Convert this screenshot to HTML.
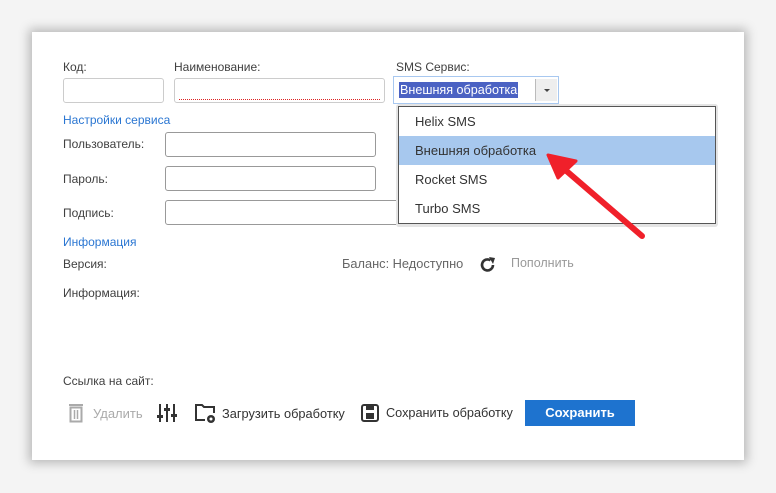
<!DOCTYPE html>
<html><head><meta charset="utf-8"><style>
body{margin:0;width:776px;height:493px;background:#f4f4f4;font-family:"Liberation Sans",Arial,sans-serif;font-size:12px;color:#404040;position:relative;overflow:hidden}
.panel{position:absolute;left:32px;top:32px;width:712px;height:428px;background:#fff;box-shadow:0 0 10px 3px rgba(0,0,0,.25)}
.a{position:absolute;white-space:nowrap}
.in{position:absolute;border:1px solid #b8b8b8;border-radius:3px;background:#fff;box-sizing:border-box}
.blue{color:#2a76d2}
</style></head><body>
<div class="panel"></div>
<div class="a" style="left:63px;top:60px">Код:</div>
<div class="a" style="left:174px;top:60px">Наименование:</div>
<div class="a" style="left:396px;top:60px">SMS Сервис:</div>
<div class="in" style="left:63px;top:78px;width:101px;height:25px;border-color:#ccc"></div>
<div class="in" style="left:174px;top:78px;width:211px;height:25px;border-color:#ccc"><div style="position:absolute;left:4px;right:4px;top:20px;border-top:1px dotted #d22"></div></div>
<div class="a" style="left:393px;top:76px;width:166px;height:28px;border:1px solid #a8c8f0;box-sizing:border-box;background:#fff">
 <div class="a" style="left:5px;top:5px;height:16px;line-height:16px;background:#4b62c3;color:#fff;font-size:12.6px;padding:0 1px">Внешняя обработка</div>
 <div class="a" style="left:141px;top:2px;width:21px;height:22px;background:#eee;border-left:1px solid #bbb"><div style="position:absolute;left:8px;top:10px;border:3px solid transparent;border-top:3px solid #444;border-bottom:0"></div></div>
</div>
<div class="a blue" style="left:63px;top:113px">Настройки сервиса</div>
<div class="a" style="left:63px;top:137px">Пользователь:</div>
<div class="a" style="left:63px;top:172px">Пароль:</div>
<div class="a" style="left:63px;top:206px">Подпись:</div>
<div class="in" style="left:165px;top:132px;width:211px;height:25px;border-color:#999"></div>
<div class="in" style="left:165px;top:166px;width:211px;height:25px;border-color:#999"></div>
<div class="in" style="left:165px;top:200px;width:240px;height:25px;border-color:#999"></div>
<div class="a" style="left:396px;top:104px;width:322px;height:123px;background:#e4e4e4;border-radius:3px"></div>
<div class="a" style="left:398px;top:106px;width:318px;height:118px;border:1px solid #555;box-sizing:border-box;background:#fff;font-size:13px;color:#333">
 <div class="a" style="left:16px;top:7px">Helix SMS</div>
 <div class="a" style="left:0;top:29px;width:316px;height:29px;background:#a7c8ee"></div>
 <div class="a" style="left:16px;top:36px">Внешняя обработка</div>
 <div class="a" style="left:16px;top:65px">Rocket SMS</div>
 <div class="a" style="left:16px;top:94px">Turbo SMS</div>
</div>
<svg class="a" style="left:530px;top:140px" width="130" height="110"><path d="M112 96 L26 22" stroke="#f0202a" stroke-width="6" stroke-linecap="round"/><path d="M18 15 L46 21 L28 38 Z" fill="#f0202a" stroke="#f0202a" stroke-width="3" stroke-linejoin="round"/></svg>
<div class="a blue" style="left:63px;top:235px">Информация</div>
<div class="a" style="left:63px;top:257px">Версия:</div>
<div class="a" style="left:342px;top:256px;color:#666;font-size:12.8px">Баланс: Недоступно</div>
<svg class="a" style="left:479px;top:256px" width="18" height="18"><path d="M14 9 A5.5 5.5 0 1 1 11.5 4.3" fill="none" stroke="#333" stroke-width="2.6"/><path d="M10 1 L16 2 L14 8 Z" fill="#333"/></svg>
<div class="a" style="left:511px;top:256px;color:#999;font-size:12.5px">Пополнить</div>
<div class="a" style="left:63px;top:286px">Информация:</div>
<div class="a" style="left:63px;top:374px">Ссылка на сайт:</div>
<svg class="a" style="left:68px;top:403px" width="16" height="20"><rect x="1" y="1" width="14" height="2" fill="#aaa"/><rect x="2.5" y="4.5" width="11" height="14" fill="none" stroke="#aaa" stroke-width="2"/><path d="M6.5 7v9M9.5 7v9" stroke="#aaa" stroke-width="1.5"/></svg>
<div class="a" style="left:93px;top:406px;color:#aaa;font-size:13px">Удалить</div>
<svg class="a" style="left:157px;top:403px" width="20" height="20"><g stroke="#333" stroke-width="2"><path d="M3 1v18M10 1v18M17 1v18"/></g><g fill="#333"><rect x="0" y="12" width="6" height="3"/><rect x="7" y="5" width="6" height="3"/><rect x="14" y="11" width="6" height="3"/></g></svg>
<svg class="a" style="left:194px;top:403px" width="24" height="22"><path d="M11 17H2V2h6l2 2h10v6" fill="none" stroke="#333" stroke-width="2"/><circle cx="17" cy="16" r="4" fill="#333"/><circle cx="17" cy="16" r="1.5" fill="#fff"/></svg>
<div class="a" style="left:222px;top:406px;font-size:12.8px;color:#333">Загрузить обработку</div>
<svg class="a" style="left:361px;top:404px" width="18" height="18"><rect x="1" y="1" width="16" height="16" rx="2" fill="none" stroke="#333" stroke-width="2"/><rect x="5" y="2" width="8" height="4" fill="#333"/><rect x="5" y="9" width="8" height="6" fill="#333"/></svg>
<div class="a" style="left:386px;top:406px;font-size:12.7px;color:#333">Сохранить обработку</div>
<div class="a" style="left:525px;top:400px;width:110px;height:26px;background:#1e73cf;color:#fff;font-weight:bold;font-size:13px;text-align:center;line-height:26px">Сохранить</div>
</body></html>
